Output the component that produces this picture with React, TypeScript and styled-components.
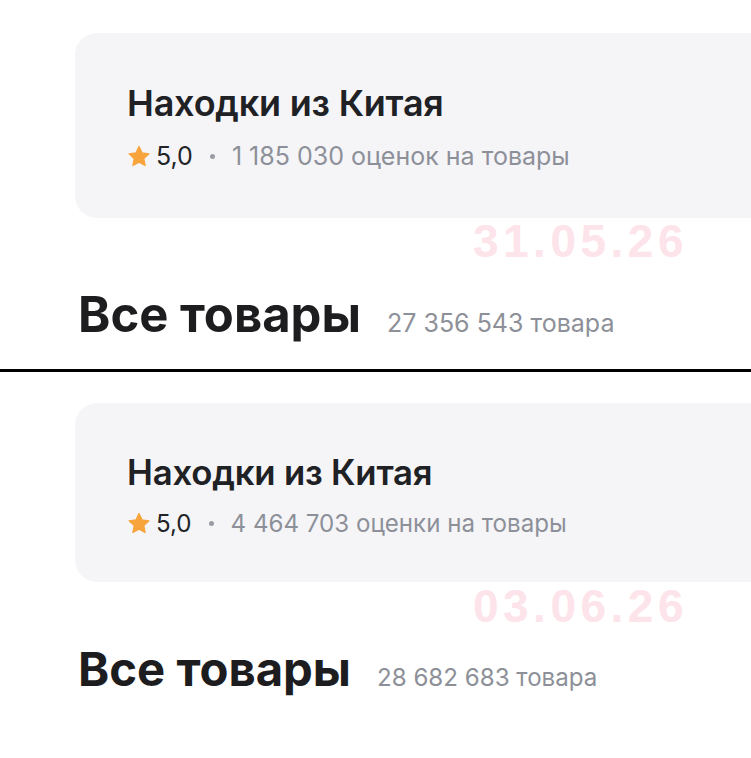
import React from 'react';
import styled, { createGlobalStyle } from 'styled-components';

interface ShotData {
    date: string,
    reviews: string,
    products: string,
    scale: number,
    cardTop: number,
    cardHeight: number,
    dateGap: number,
    headingGap: number,
    height: number
}

const shots: ShotData[] = [
    {
        date: "31.05.26", reviews: "1 185 030 оценок на товары", products: "27 356 543 товара",
        scale: 1, cardTop: 33, cardHeight: 185, dateGap: 2, headingGap: 27, height: 369
    },
    {
        date: "03.06.26", reviews: "4 464 703 оценки на товары", products: "28 682 683 товара",
        scale: 0.965, cardTop: 31, cardHeight: 179, dateGap: 3, headingGap: 17, height: 386
    },
]

function Star() {
    return (
        <svg width="24" height="24" viewBox="0 0 24 24">
            <path
                d="M12 1.6l3 6.3 6.9.9-5.1 4.8 1.3 6.9L12 17.2l-6.1 3.3 1.3-6.9-5.1-4.8 6.9-.9z"
                fill="#f8a43c"
                stroke="#f8a43c"
                strokeWidth="1.3"
                strokeLinejoin="round"
            />
        </svg>
    )
}

function Shot(props: ShotData) {
    return (
        <ShotWrapper top={props.cardTop} height={props.height}>
            <SellerCard height={props.cardHeight}>
                <SellerName scale={props.scale}>Находки из Китая</SellerName>
                <RatingRow scale={props.scale}>
                    <Star/>
                    <RatingValue>5,0</RatingValue>
                    <Bullet/>
                    <Reviews>{props.reviews}</Reviews>
                </RatingRow>
            </SellerCard>
            <DateMark gap={props.dateGap}>{props.date}</DateMark>
            <HeadingRow gap={props.headingGap}>
                <Heading scale={props.scale}>Все товары</Heading>
                <Count scale={props.scale}>{props.products}</Count>
            </HeadingRow>
        </ShotWrapper>
    )
}

function App() {
    return (
        <>
            <GlobalStyle/>
            <Page>
                <Shot {...shots[0]}/>
                <Divider/>
                <Shot {...shots[1]}/>
            </Page>
        </>
    )
}

const GlobalStyle = createGlobalStyle`
    body {
        margin: 0;
        background: #ffffff;
        font-family: Inter, Roboto, "Liberation Sans", sans-serif;
        color: #1f1f22;
    }
`

const Page = styled.div`
    width: 751px;
    height: 758px;
    overflow: hidden;
    display: flex;
    flex-direction: column;
`

const ShotWrapper = styled.section<{ top: number, height: number }>`
    display: flex;
    flex-direction: column;
    flex-shrink: 0;
    padding-top: ${p => p.top}px;
    height: ${p => p.height}px;
    box-sizing: border-box;

    & > * {
        flex-shrink: 0;
    }
`

const SellerCard = styled.div<{ height: number }>`
    margin-left: 75px;
    margin-right: -40px;
    height: ${p => p.height}px;
    box-sizing: border-box;
    padding: 48px 0 0 52px;
    background: #f5f5f8;
    border-radius: 22px;
`

const SellerName = styled.div<{ scale: number }>`
    font-size: ${p => 36 * p.scale}px;
    font-weight: 600;
    line-height: ${p => 44 * p.scale}px;
    letter-spacing: -0.2px;
    color: #202124;
`

const RatingRow = styled.div<{ scale: number }>`
    display: flex;
    align-items: center;
    gap: 5px;
    margin-top: ${p => 17 * p.scale}px;
    font-size: ${p => 25 * p.scale}px;
    line-height: ${p => 29 * p.scale}px;
`

const RatingValue = styled.span`
    color: #222326;
`

const Bullet = styled.span`
    width: 5px;
    height: 5px;
    border-radius: 50%;
    background: #9b9da4;
    margin: 0 12px;
`

const Reviews = styled.span`
    color: #8d9098;
`

const DateMark = styled.div<{ gap: number }>`
    align-self: flex-end;
    margin-right: 63px;
    margin-top: ${p => p.gap}px;
    font-family: "Liberation Sans", Arial, sans-serif;
    font-weight: 700;
    font-size: 46px;
    line-height: 42px;
    letter-spacing: 4.5px;
    color: #fde3ea;
`

const HeadingRow = styled.div<{ gap: number }>`
    display: flex;
    align-items: baseline;
    gap: 26px;
    margin: ${p => p.gap}px 0 0 78px;
`

const Heading = styled.h1<{ scale: number }>`
    margin: 0;
    font-size: ${p => 49 * p.scale}px;
    font-weight: 700;
    line-height: ${p => 52 * p.scale}px;
    color: #1d1d1f;
`

const Count = styled.span<{ scale: number }>`
    font-size: ${p => 25 * p.scale}px;
    color: #8d9098;
`

const Divider = styled.div`
    height: 3px;
    flex-shrink: 0;
    background: #000000;
`

export default App;
